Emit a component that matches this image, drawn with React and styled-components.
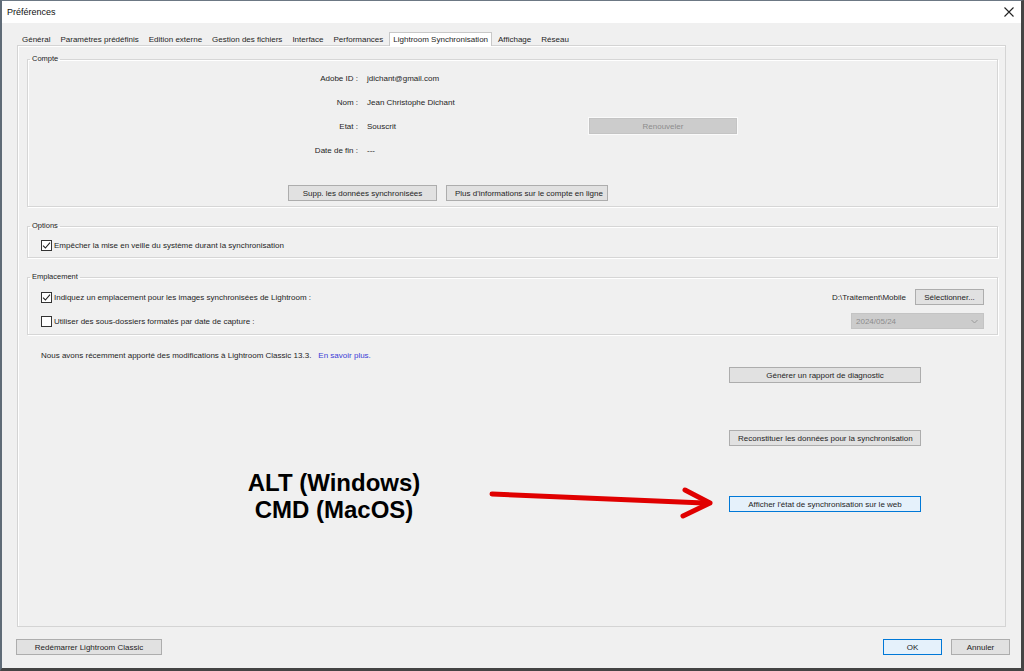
import styled, { createGlobalStyle } from "styled-components";

const GlobalStyle = createGlobalStyle`
  body {
    margin: 0;
    background: #f0f0f0;
    font-family: "Liberation Sans", Arial, sans-serif;
    font-size: 8px;
    color: #1e1e1e;
  }
  * { box-sizing: border-box; }
`;

const Window = styled.div`
  width: 1024px;
  height: 671px;
  display: flex;
  flex-direction: column;
  background: #f0f0f0;
  border-top: 1px solid #6c7884;
  border-left: 2px solid #5f6b77;
  border-right: 3px solid #444;
  border-bottom: 3px solid #444;
  overflow: hidden;
`;

const TitleBar = styled.div`
  height: 22px;
  flex: none;
  background: #fff;
  display: flex;
  align-items: center;
  justify-content: space-between;
  padding: 0 7px 0 5px;
  font-size: 9px;
  color: #111;
`;

const Main = styled.div`
  flex: 1;
  display: flex;
  flex-direction: column;
  padding: 9px 15px 0 15px;
  min-height: 0;
`;

const TabStrip = styled.div`
  height: 13px;
  display: flex;
  align-items: flex-end;
  padding-left: 1px;
  gap: 2px;
`;

const Tab = styled.div`
  height: ${(p) => (p.$active ? "14px" : "12px")};
  padding: 0 3px;
  display: flex;
  align-items: center;
  white-space: nowrap;
  background: ${(p) => (p.$active ? "#fff" : "transparent")};
  border: 1px solid ${(p) => (p.$active ? "#c8c8c8" : "transparent")};
  border-bottom: none;
  margin-bottom: ${(p) => (p.$active ? "-1px" : "0")};
  position: relative;
  z-index: 1;
`;

const Panel = styled.div`
  flex: 1;
  position: relative;
  border: 1px solid #d4d4d4;
  box-shadow: inset 1px 1px 0 #fff;
  padding: 8px 7px 0 9px;
  display: flex;
  flex-direction: column;
`;

const Group = styled.fieldset`
  margin: 0 0 ${(p) => p.$gap || 0}px 0;
  border: 1px solid #d6d6d6;
  box-shadow: inset 1px 1px 0 #fff, 1px 1px 0 #fff;
  padding: ${(p) => p.$pad};
  min-width: 0;
`;

const Legend = styled.legend`
  font-size: 7.5px;
  line-height: 10px;
  padding: 0 2px;
  margin-left: ${(p) => (p.$shift ? 2 - p.$shift : 2)}px;
  color: #222;
`;

const InfoGrid = styled.div`
  display: grid;
  grid-template-columns: 330px 213px 148px;
  grid-auto-rows: 24px;
  column-gap: 9px;
  align-items: center;
`;

const Label = styled.span`
  text-align: right;
`;

const Button = styled.button`
  font-family: inherit;
  font-size: 8px;
  height: 16px;
  width: ${(p) => (p.$w ? `${p.$w}px` : "auto")};
  padding: 0 8px;
  margin: 0;
  border: 1px solid ${(p) => (p.$focus ? "#0078d7" : p.$disabled ? "#c4c4c4" : "#adadad")};
  background: ${(p) => (p.$focus ? "#e5f1fb" : p.$disabled ? "#cccccc" : "#e1e1e1")};
  color: ${(p) => (p.$disabled ? "#8c8c8c" : "#1e1e1e")};
  box-shadow: ${(p) => (p.$disabled ? "0 0 0 1px #fafafa" : "none")};
  white-space: nowrap;
`;

const ButtonRow = styled.div`
  display: flex;
  gap: 9px;
  padding-left: 260px;
  margin-top: 23px;
`;

const CheckRow = styled.div`
  display: flex;
  align-items: center;
  height: 16px;
  gap: 8px;
  margin-top: ${(p) => p.$top || 0}px;
`;

const CheckLabel = styled.label`
  display: flex;
  align-items: center;
  gap: 2px;
  flex: 1;
`;

const Box = styled.span`
  width: 11px;
  height: 11px;
  border: 1px solid #333;
  background: #fff;
  display: inline-flex;
  align-items: center;
  justify-content: center;
`;

const Path = styled.span`
  margin-right: 1px;
`;

const Select = styled.div`
  width: 133px;
  height: 16px;
  background: #cccccc;
  border: 1px solid #c4c4c4;
  color: #8c8c8c;
  display: flex;
  align-items: center;
  justify-content: space-between;
  padding: 0 5px 0 4px;
`;

const Note = styled.p`
  margin: 16px 0 0 14px;
  line-height: 10px;
`;

const Link = styled.span`
  color: #3b3bd6;
  margin-left: 7px;
`;

const ToolColumn = styled.div`
  display: flex;
  flex-direction: column;
  margin-left: 702px;
  width: 192px;
`;

const ToolButton = styled(Button)`
  width: 192px;
  margin-top: ${(p) => p.$top}px;
`;

const Annotation = styled.div`
  position: absolute;
  left: 201px;
  top: 423px;
  width: 230px;
  text-align: center;
  font-family: "Liberation Sans", Arial, sans-serif;
  font-weight: bold;
  font-size: 24px;
  line-height: 27px;
  color: #000;
`;

const Arrow = styled.svg`
  position: absolute;
  left: 454px;
  top: 437px;
`;

const Footer = styled.div`
  height: 41px;
  flex: none;
  display: flex;
  align-items: center;
  padding: 0 11px 1px 14px;
  gap: 9px;
`;

const Spacer = styled.div`
  flex: 1;
`;

function Check({ checked }) {
  return (
    <Box>
      {checked && (
        <svg width="9" height="9" viewBox="0 0 9 9">
          <path d="M1 4.6 L3.4 7 L8 1.6" fill="none" stroke="#222" strokeWidth="1.1" />
        </svg>
      )}
    </Box>
  );
}

const tabs = [
  "Général",
  "Paramètres prédéfinis",
  "Edition externe",
  "Gestion des fichiers",
  "Interface",
  "Performances",
  "Lightroom Synchronisation",
  "Affichage",
  "Réseau",
];

export default function App() {
  return (
    <>
      <GlobalStyle />
      <Window>
        <TitleBar>
          <span>Préférences</span>
          <svg width="10" height="10" viewBox="0 0 10 10">
            <path d="M0.5 0.5 L9.5 9.5 M9.5 0.5 L0.5 9.5" stroke="#222" strokeWidth="1.1" />
          </svg>
        </TitleBar>
        <Main>
          <TabStrip>
            {tabs.map((t) => (
              <Tab key={t} $active={t === "Lightroom Synchronisation"}>
                {t}
              </Tab>
            ))}
          </TabStrip>
          <Panel>
            <Group $pad="2px 0 5px 0" $gap={14}>
              <Legend>Compte</Legend>
              <InfoGrid>
                <Label>Adobe ID :</Label>
                <span>jdichant@gmail.com</span>
                <span />
                <Label>Nom :</Label>
                <span>Jean Christophe Dichant</span>
                <span />
                <Label>Etat :</Label>
                <span>Souscrit</span>
                <Button $disabled $w={148}>Renouveler</Button>
                <Label>Date de fin :</Label>
                <span>---</span>
                <span />
              </InfoGrid>
              <ButtonRow>
                <Button $w={149}>Supp. les données synchronisées</Button>
                <Button $w={162}>Plus d'informations sur le compte en ligne</Button>
              </ButtonRow>
            </Group>

            <Group $pad="6px 13px 4px 13px" $gap={14}>
              <Legend $shift={13}>Options</Legend>
              <CheckRow>
                <CheckLabel>
                  <Check checked />
                  Empêcher la mise en veille du système durant la synchronisation
                </CheckLabel>
              </CheckRow>
            </Group>

            <Group $pad="7px 13px 5px 13px">
              <Legend $shift={13}>Emplacement</Legend>
              <CheckRow>
                <CheckLabel>
                  <Check checked />
                  Indiquez un emplacement pour les images synchronisées de Lightroom :
                </CheckLabel>
                <Path>D:\Traitement\Mobile</Path>
                <Button $w={69}>Sélectionner...</Button>
              </CheckRow>
              <CheckRow $top={8}>
                <CheckLabel>
                  <Check />
                  Utiliser des sous-dossiers formatés par date de capture :
                </CheckLabel>
                <Select>
                  <span>2024/05/24</span>
                  <svg width="7" height="5" viewBox="0 0 7 5">
                    <path d="M0.5 1 L3.5 4 L6.5 1" fill="none" stroke="#9a9a9a" strokeWidth="1" />
                  </svg>
                </Select>
              </CheckRow>
            </Group>

            <Note>
              Nous avons récemment apporté des modifications à Lightroom Classic 13.3.
              <Link>En savoir plus.</Link>
            </Note>

            <ToolColumn>
              <ToolButton $top={6}>Générer un rapport de diagnostic</ToolButton>
              <ToolButton $top={47}>Reconstituer les données pour la synchronisation</ToolButton>
              <ToolButton $top={50} $focus>Afficher l'état de synchronisation sur le web</ToolButton>
            </ToolColumn>

            <Annotation>
              ALT (Windows)
              <br />
              CMD (MacOS)
            </Annotation>
            <Arrow width="250" height="40" viewBox="0 0 250 40">
              <path d="M20 11 L232 20" stroke="#e00000" strokeWidth="5" strokeLinecap="round" />
              <path d="M213 7 L238 20 L211 33" fill="none" stroke="#e00000" strokeWidth="5" strokeLinecap="round" strokeLinejoin="round" />
            </Arrow>
          </Panel>
        </Main>
        <Footer>
          <Button $w={146}>Redémarrer Lightroom Classic</Button>
          <Spacer />
          <Button $w={59} $focus>OK</Button>
          <Button $w={59}>Annuler</Button>
        </Footer>
      </Window>
    </>
  );
}
